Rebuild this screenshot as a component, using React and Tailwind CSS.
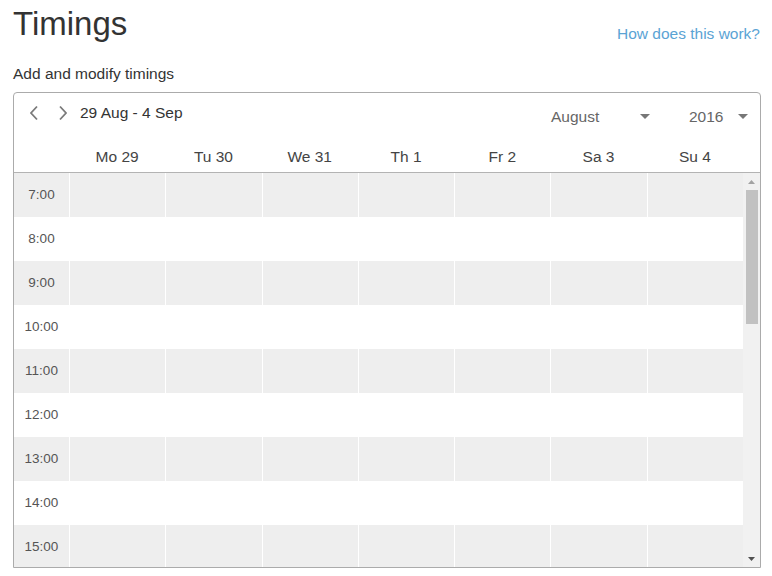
import React from 'react';

const days = ['Mo 29', 'Tu 30', 'We 31', 'Th 1', 'Fr 2', 'Sa 3', 'Su 4'];
const hours = ['7:00', '8:00', '9:00', '10:00', '11:00', '12:00', '13:00', '14:00', '15:00'];

const Chevron = ({ dir }) => (
  <svg width="10" height="16" viewBox="0 0 10 16" className="block">
    <polyline
      points={dir === 'left' ? '8,1.5 2,8 8,14.5' : '2,1.5 8,8 2,14.5'}
      fill="none"
      stroke="#7a7a7a"
      strokeWidth="1.8"
    />
  </svg>
);

const Caret = ({ color = '#777' }) => (
  <svg width="10" height="5" viewBox="0 0 10 5" className="block">
    <polygon points="0,0 10,0 5,5" fill={color} />
  </svg>
);

const Dropdown = ({ label, width }) => (
  <div className={`flex items-center justify-between ${width}`}>
    <span className="text-[15.5px] text-[#666]">{label}</span>
    <Caret />
  </div>
);

export default function App() {
  return (
    <div className="bg-white min-h-screen px-[13px] pt-[4px] text-[#333]" style={{ fontFamily: '"Liberation Sans", Arial, sans-serif' }}>
      <div className="flex justify-between items-end">
        <h1 className="text-[33px] leading-[40px] text-[#333]">Timings</h1>
        <a className="text-[15.5px] leading-[20px] text-[#5aa3d4] -mr-[1px]">How does this work?</a>
      </div>
      <p className="mt-[20px] text-[15.5px] leading-[20px] text-[#333]">Add and modify timings</p>

      <div className="mt-[8px] border border-[#ababab] rounded-t-[4px] overflow-hidden w-[748px]">
        <div className="h-[40px] flex items-center justify-between pl-[15px] pr-[12px]">
          <div className="flex items-center">
            <Chevron dir="left" />
            <span className="ml-[19px]"><Chevron dir="right" /></span>
            <span className="ml-[12px] text-[15.5px] text-[#333] -mt-[1px]">29 Aug - 4 Sep</span>
          </div>
          <div className="flex items-center gap-[39px] mt-[7px]">
            <Dropdown label="August" width="w-[99px]" />
            <Dropdown label="2016" width="w-[59px]" />
          </div>
        </div>

        <div className="flex h-[40px] border-b border-[#b3b3b3]">
          <div className="w-[55px]" />
          <div className="flex-1 grid grid-cols-7 items-end pb-[5px]">
            {days.map(d => (
              <div key={d} className="text-center text-[15.5px] leading-[20px] text-[#444]">{d}</div>
            ))}
          </div>
          <div className="w-[17px]" />
        </div>

        <div className="flex h-[394px]">
          <div className="flex-1 overflow-hidden">
            {hours.map((h, i) => (
              <div
                key={h}
                className={`grid grid-cols-[55px_repeat(7,1fr)] h-[44px] shrink-0 ${i % 2 === 0 ? 'bg-[#eeeeee]' : 'bg-white'}`}
              >
                <div className="flex items-center justify-center text-[13.5px] text-[#555]">{h}</div>
                {days.map(d => (
                  <div key={d} className="border-l border-white" />
                ))}
              </div>
            ))}
          </div>
          <div className="w-[17px] bg-[#f1f1f1] flex flex-col items-center">
            <div className="h-[17px] flex items-center justify-center">
              <svg width="7" height="4" viewBox="0 0 7 4" className="block">
                <polygon points="0,4 7,4 3.5,0" fill="#a3a3a3" />
              </svg>
            </div>
            <div className="w-[12px] h-[134px] bg-[#c1c1c1]" />
            <div className="flex-1" />
            <div className="h-[17px] flex items-center justify-center">
              <svg width="7" height="4" viewBox="0 0 7 4" className="block">
                <polygon points="0,0 7,0 3.5,4" fill="#505050" />
              </svg>
            </div>
          </div>
        </div>
      </div>
    </div>
  );
}
